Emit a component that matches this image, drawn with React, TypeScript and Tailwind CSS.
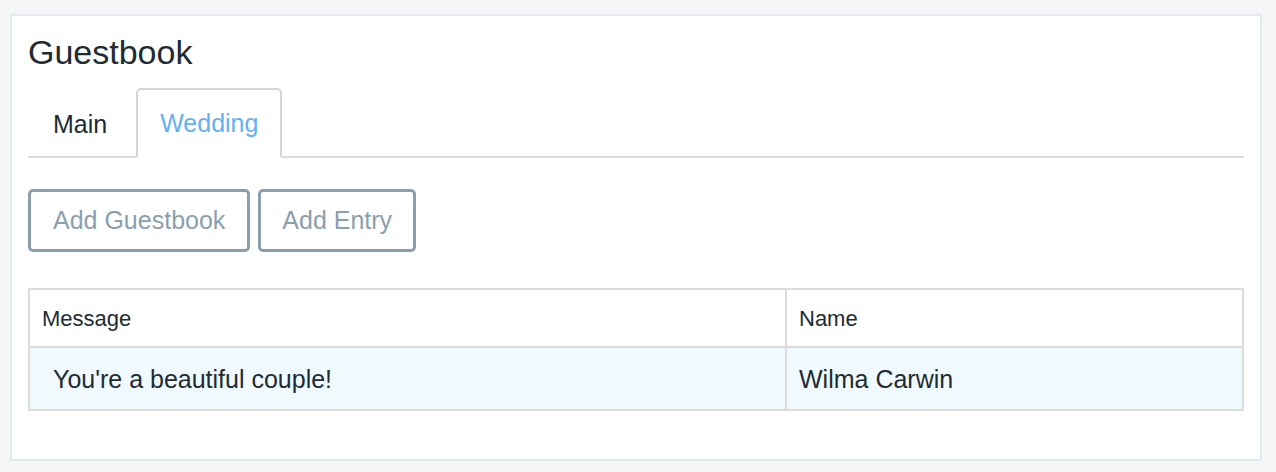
import React from 'react';

const rows = [{ message: "You're a beautiful couple!", name: 'Wilma Carwin' }];

const App = () => {
  return (
    <div className="min-h-[472px] bg-[#f4f6f8] pt-[14px] pl-[10px] font-['Liberation_Sans',Arial,sans-serif] text-[#212b33]">
      <div className="w-[1252px] h-[447px] bg-white border-2 border-[#dfeced] px-4 pt-[14px]">
        <h1 className="text-[34px] leading-[44px] text-[#212b33]">Guestbook</h1>

        <div className="flex items-end mt-[14px] border-b-2 border-[#dcdcdc]">
          <button className="px-[23px] pt-[2px] h-[68px] -mb-[2px] border-2 border-transparent text-[25px] text-[#212b33] mr-[4px]">
            Main
          </button>
          <button className="px-[22px] pt-[2px] h-[70px] -mb-[2px] border-2 border-b-white border-[#d6d6d6] rounded-t-[5px] bg-white text-[25px] text-[#64b1ee]">
            Wedding
          </button>
        </div>

        <div className="flex gap-2 mt-[31px]">
          <button className="h-[63px] px-[22px] border-[3px] border-[#8a9eac] rounded-[5px] text-[25px] text-[#8a9fae]">
            Add Guestbook
          </button>
          <button className="h-[63px] px-[21px] border-[3px] border-[#8a9eac] rounded-[5px] text-[25px] text-[#8a9fae]">
            Add Entry
          </button>
        </div>

        <div className="mt-[36px] border-2 border-[#dcdcdc]">
          <div className="grid grid-cols-[757px_1fr] h-[58px] border-b-2 border-[#dcdcdc] text-[22px] text-[#212b33]">
            <div className="flex items-center pl-3 border-r-2 border-[#dcdcdc]">Message</div>
            <div className="flex items-center pl-3">Name</div>
          </div>
          {rows.map((r) => (
            <div key={r.name} className="grid grid-cols-[757px_1fr] h-[61px] bg-[#f0f9fd] text-[25px] text-[#212b33]">
              <div className="flex items-center pt-[3px] pl-[23px] border-r-2 border-[#dcdcdc]">{r.message}</div>
              <div className="flex items-center pt-[3px] pl-3">{r.name}</div>
            </div>
          ))}
        </div>
      </div>
    </div>
  );
};

export default App;
